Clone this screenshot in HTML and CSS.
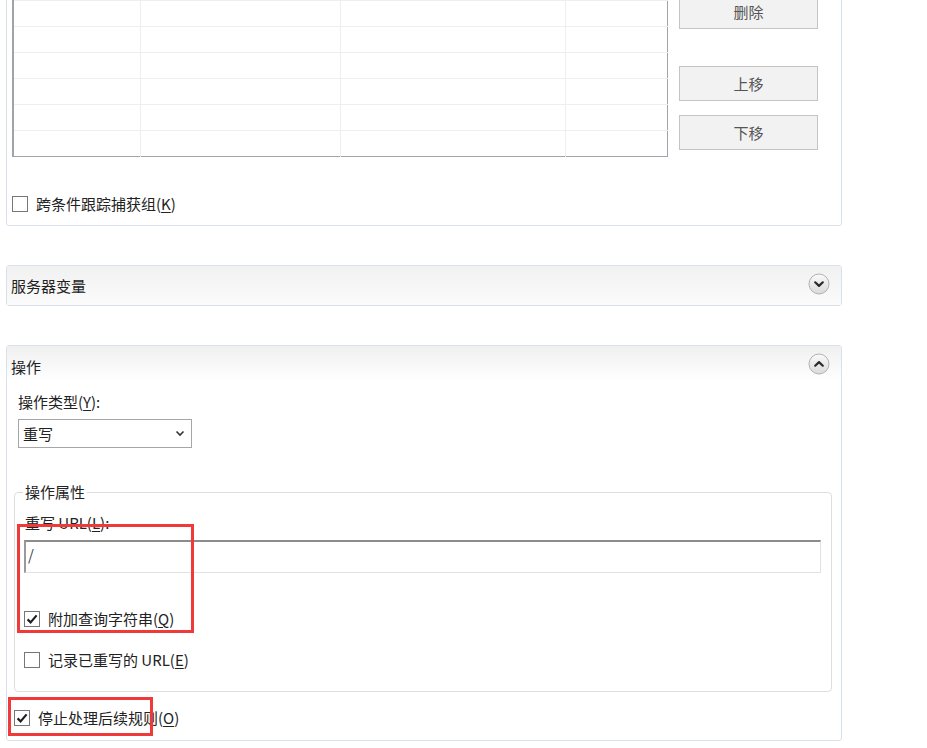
FILE: index.html
```html
<!DOCTYPE html>
<html lang="zh-CN">
<head>
    <meta charset="UTF-8">
    <meta name="viewport" content="width=device-width, initial-scale=1.0">
    <title>编辑入站规则</title>
    <link rel="stylesheet" href="styles.css">
</head>
<body>

    <div class="page">

        <!-- 条件 -->
        <div class="panel panel-conditions">
            <div class="cond-row">
                <table class="cond-table">
                    <tr><td></td><td></td><td></td><td></td></tr>
                    <tr><td></td><td></td><td></td><td></td></tr>
                    <tr><td></td><td></td><td></td><td></td></tr>
                    <tr><td></td><td></td><td></td><td></td></tr>
                    <tr><td></td><td></td><td></td><td></td></tr>
                    <tr><td></td><td></td><td></td><td></td></tr>
                    <tr><td></td><td></td><td></td><td></td></tr>
                    <tr><td></td><td></td><td></td><td></td></tr>
                </table>
                <div class="cond-buttons">
                    <button class="btn btn-remove">删除</button>
                    <button class="btn btn-up">上移</button>
                    <button class="btn btn-down">下移</button>
                </div>
            </div>
            <label class="check">
                <span class="box"></span>
                <span>跨条件跟踪捕获组(<u>K</u>)</span>
            </label>
        </div>

        <!-- 服务器变量 -->
        <div class="panel panel-collapsed">
            <div class="panel-header">
                <span>服务器变量</span>
                <svg class="toggle" width="22" height="22" viewBox="0 0 22 22">
                    <defs>
                        <linearGradient id="g1" x1="0" y1="0" x2="0" y2="1">
                            <stop offset="0" stop-color="#fbfbfb"/>
                            <stop offset="1" stop-color="#d9d9d9"/>
                        </linearGradient>
                    </defs>
                    <circle cx="11" cy="11" r="10" fill="url(#g1)" stroke="#b3b3b3"/>
                    <path d="M7.2 9.3 L11 12.9 L14.8 9.3" fill="none" stroke="#2b2b2b" stroke-width="2.2" stroke-linecap="round" stroke-linejoin="round"/>
                </svg>
            </div>
        </div>

        <!-- 操作 -->
        <div class="panel panel-action">
            <div class="panel-header">
                <span>操作</span>
                <svg class="toggle" width="22" height="22" viewBox="0 0 22 22">
                    <defs>
                        <linearGradient id="g2" x1="0" y1="0" x2="0" y2="1">
                            <stop offset="0" stop-color="#fbfbfb"/>
                            <stop offset="1" stop-color="#d9d9d9"/>
                        </linearGradient>
                    </defs>
                    <circle cx="11" cy="11" r="10" fill="url(#g2)" stroke="#b3b3b3"/>
                    <path d="M7.2 12.7 L11 9.1 L14.8 12.7" fill="none" stroke="#2b2b2b" stroke-width="2.2" stroke-linecap="round" stroke-linejoin="round"/>
                </svg>
            </div>

            <div class="panel-body">
                <div class="field-label">操作类型(<u>Y</u>):</div>
                <div class="select">
                    <span>重写</span>
                    <svg width="10" height="7" viewBox="0 0 10 7">
                        <path d="M1.5 1.5 L5 5 L8.5 1.5" fill="none" stroke="#333" stroke-width="1.6"/>
                    </svg>
                </div>

                <fieldset class="props">
                    <legend>操作属性</legend>
                    <div class="url-label">重写 URL(<u>L</u>):</div>
                    <div class="url-input">/</div>
                    <label class="check check-append">
                        <span class="box checked">
                            <svg width="16" height="16" viewBox="0 0 16 16"><path d="M3.6 8.4 L6.6 11.4 L12.6 4.4" fill="none" stroke="#1f1f1f" stroke-width="2.2"/></svg>
                        </span>
                        <span>附加查询字符串(<u>Q</u>)</span>
                    </label>
                    <label class="check check-log">
                        <span class="box"></span>
                        <span>记录已重写的 URL(<u>E</u>)</span>
                    </label>
                </fieldset>

                <label class="check check-stop">
                    <span class="box checked">
                        <svg width="16" height="16" viewBox="0 0 16 16"><path d="M3.6 8.4 L6.6 11.4 L12.6 4.4" fill="none" stroke="#1f1f1f" stroke-width="2.2"/></svg>
                    </span>
                    <span>停止处理后续规则(<u>O</u>)</span>
                </label>
            </div>

            <!-- highlight marks -->
            <div class="mark mark-url"></div>
            <div class="mark mark-stop"></div>
        </div>

    </div>

</body>
</html>
```

FILE: styles.css
```css
/* Global Styles */
body {
    margin: 0;
    background: #ffffff;
    font-family: "Noto Sans CJK SC", "Noto Sans", sans-serif;
    font-size: 15px;
    color: #222;
    overflow: hidden;
}

u {
    text-decoration: underline;
    text-underline-offset: 2px;
}

/* Page column */
.page {
    width: 837px;
    margin: -59px 0 0 5px;
}

/* Panels */
.panel {
    border: 1px solid #d8e1ea;
    border-radius: 3px;
    margin-left: 1px;
    background: #fff;
}

.panel-conditions {
    padding: 6px 0 11px 5px;
}

.panel-collapsed {
    margin-top: 39px;
}

.panel-action {
    margin-top: 39px;
    position: relative;
    height: 394px;
}

.panel-header {
    height: 39px;
    display: flex;
    justify-content: space-between;
    align-items: flex-start;
    padding: 0 11px 0 4px;
    background: linear-gradient(#f1f1f1, #fbfbfb);
}

.panel-header span {
    margin-top: 10px;
    line-height: 20px;
}

.toggle {
    margin-top: 7px;
}

.panel-action .panel-header {
    height: 36px;
    background: linear-gradient(#f0f0f0, #ffffff);
}

.panel-action .panel-header span {
    margin-top: 11px;
}

/* Conditions table */
.cond-row {
    display: flex;
    gap: 11px;
}

.cond-table {
    width: 656px;
    border-collapse: collapse;
    border: 1px solid #a2a2aa;
    border-left-width: 2px;
}

.cond-table td {
    height: 25px;
    padding: 0;
    border-bottom: 1px solid #eeeeee;
    border-right: 1px solid #eeeeee;
}

.cond-table tr:last-child td {
    border-bottom: none;
}

.cond-table td:nth-child(1) { width: 126px; }
.cond-table td:nth-child(2) { width: 199px; }
.cond-table td:nth-child(3) { width: 224px; }
.cond-table td:last-child { border-right: none; }

.cond-buttons {
    display: flex;
    flex-direction: column;
    padding-top: 46px;
}

.btn {
    width: 139px;
    height: 35px;
    background: #f2f2f2;
    border: 1px solid #c4c4c4;
    font-family: inherit;
    font-size: 15px;
    color: #555;
    padding: 0;
}

.btn-up {
    margin-top: 37px;
}

.btn-down {
    margin-top: 14px;
}

/* Checkboxes */
.check {
    display: flex;
    align-items: center;
    gap: 8px;
    line-height: 20px;
}

.box {
    width: 16px;
    height: 16px;
    box-sizing: border-box;
    border: 1px solid #777;
    background: #fff;
    position: relative;
}

.box svg {
    position: absolute;
    left: -1px;
    top: -1px;
}

.panel-conditions .check {
    margin-top: 37px;
}

/* Action body */
.panel-body {
    padding: 0 8px 0 7px;
}

.field-label {
    margin: 10px 0 0 4px;
    line-height: 20px;
}

.select {
    width: 174px;
    height: 29px;
    box-sizing: border-box;
    margin: 7px 0 0 4px;
    border: 1px solid #a6a6a6;
    display: flex;
    align-items: center;
    justify-content: space-between;
    padding: 0 6px 0 4px;
}

/* Fieldset */
.props {
    margin: 34px 0 0 0;
    width: 818px;
    box-sizing: border-box;
    border: 1px solid #dedede;
    border-radius: 4px;
    padding: 11px 10px 21px 9px;
}

.props legend {
    padding: 0 2px;
    margin-left: -1px;
    line-height: 20px;
}

.url-label {
    line-height: 20px;
    margin-left: 1px;
}

.url-input {
    margin-top: 7px;
    height: 33px;
    box-sizing: border-box;
    border-top: 2px solid #8c8c8c;
    border-left: 2px solid #9a9a9a;
    border-right: 1px solid #e2e2e2;
    border-bottom: 1px solid #e2e2e2;
    padding: 3px 0 0 2px;
    line-height: 20px;
    color: #444;
}

.check-append {
    margin-top: 36px;
}

.check-log {
    margin-top: 21px;
}

.check-stop {
    margin-top: 16px;
}

/* Red highlight boxes */
.mark {
    position: absolute;
    border: 3px solid #f03a3a;
    box-sizing: border-box;
}

.mark-url {
    left: 10px;
    top: 178px;
    width: 177px;
    height: 109px;
}

.mark-stop {
    left: 1px;
    top: 351px;
    width: 145px;
    height: 39px;
}
```
